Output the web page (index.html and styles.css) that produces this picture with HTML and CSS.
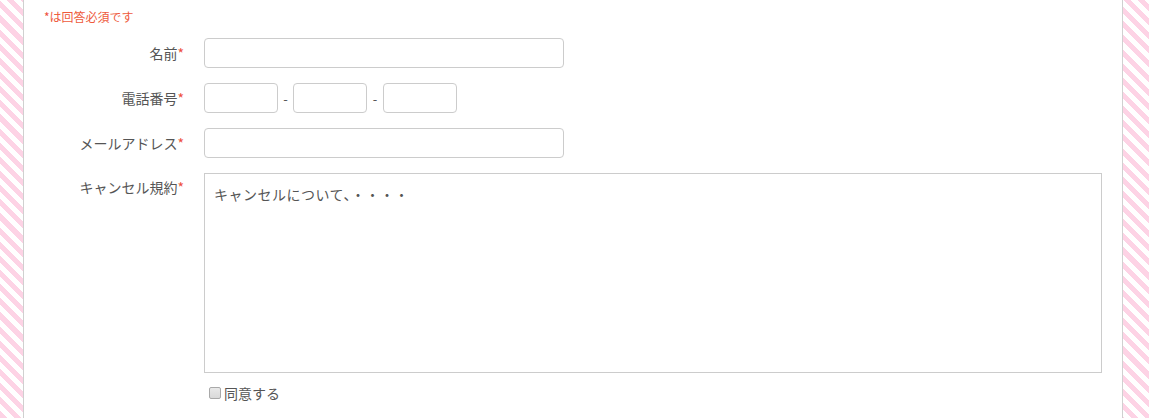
FILE: index.html
```html
<!DOCTYPE html>
<html lang="ja">
<head>
    <meta charset="UTF-8">
    <title>予約フォーム</title>
    <link rel="stylesheet" href="styles.css">
</head>
<body>
    <div class="container">
        <p class="required-note"><span class="req">*</span>は回答必須です</p>

        <form class="form">
            <div class="form-row">
                <label class="form-label">名前<span class="req">*</span></label>
                <div class="form-field">
                    <input type="text" class="input input-wide">
                </div>
            </div>

            <div class="form-row">
                <label class="form-label">電話番号<span class="req">*</span></label>
                <div class="form-field tel-group">
                    <input type="text" class="input input-tel">
                    <span class="dash">-</span>
                    <input type="text" class="input input-tel">
                    <span class="dash dash-wide">-</span>
                    <input type="text" class="input input-tel">
                </div>
            </div>

            <div class="form-row">
                <label class="form-label">メールアドレス<span class="req">*</span></label>
                <div class="form-field">
                    <input type="text" class="input input-wide">
                </div>
            </div>

            <div class="form-row form-row-top">
                <label class="form-label">キャンセル規約<span class="req">*</span></label>
                <div class="form-field">
                    <textarea class="policy" readonly>キャンセルについて、・・・・</textarea>
                    <label class="agree"><input type="checkbox" class="agree-check">同意する</label>
                </div>
            </div>
        </form>
    </div>
</body>
</html>
```

FILE: styles.css
```css
html, body {
    margin: 0;
    height: 100%;
}

body {
    font-family: "Noto Sans CJK JP", "Noto Sans", sans-serif;
    color: #555;
    background: repeating-linear-gradient(45deg, #fdd3e5 0, #fdd3e5 5px, #ffffff 5px, #ffffff 10px);
    overflow: hidden;
}

.container {
    width: 1057px;
    margin-left: 23px;
    height: 100%;
    padding: 8px 21px 0 20px;
    background: #fff;
    border-left: 1px solid #d0d0d0;
    border-right: 1px solid #d0d0d0;
}

.required-note {
    margin: 0 0 12px;
    font-size: 12px;
    line-height: 18px;
    color: #ee5a3c;
}

.req {
    color: #ee4f3c;
}

.form-row {
    display: flex;
    align-items: center;
    gap: 20px;
    margin-bottom: 15px;
}

.form-row-top {
    align-items: flex-start;
}

.form-label {
    width: 140px;
    flex-shrink: 0;
    text-align: right;
    font-size: 14px;
    line-height: 30px;
}

.form-row-top .form-label {
    line-height: 28px;
}

.form-field {
    flex: 1;
}

.input {
    box-sizing: border-box;
    height: 30px;
    border: 1px solid #ccc;
    border-radius: 4px;
    padding: 0 8px;
    font: inherit;
    font-size: 14px;
    background: #fff;
}

.input-wide {
    width: 360px;
    display: block;
}

.tel-group {
    display: flex;
    align-items: center;
}

.input-tel {
    width: 74px;
}

.dash {
    width: 15px;
    text-align: center;
    font-size: 13px;
    color: #555;
}

.dash-wide {
    width: 16px;
}

.policy {
    display: block;
    box-sizing: border-box;
    width: 898px;
    height: 200px;
    margin: 0;
    padding: 9px 9px;
    border: 1px solid #ccc;
    border-radius: 0;
    resize: none;
    font-family: "Noto Sans CJK JP", "Noto Sans", sans-serif;
    font-size: 14px;
    line-height: 22px;
    letter-spacing: 0.5px;
    color: #555;
}

.agree {
    display: flex;
    align-items: center;
    margin-top: 10px;
    font-size: 14px;
    line-height: 20px;
}

.agree-check {
    appearance: none;
    box-sizing: border-box;
    width: 12px;
    height: 12px;
    margin: 0 3px 0 5px;
    border: 1px solid #a9a9a9;
    border-radius: 2px;
    background: linear-gradient(#e9e9e9, #d9d9d9);
}
```
